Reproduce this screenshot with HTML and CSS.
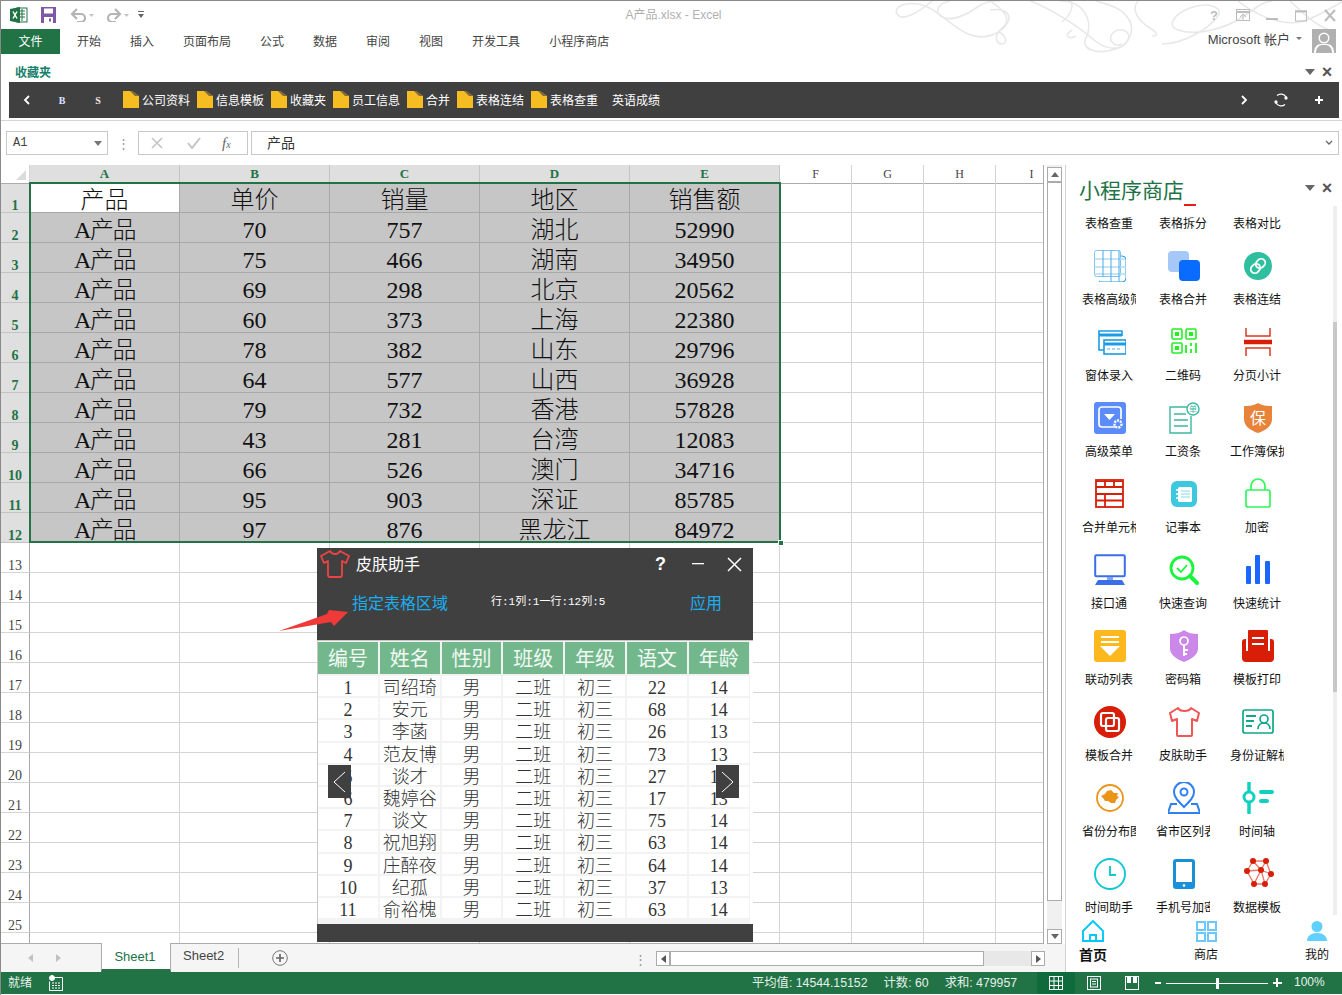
FILE: index.html
```html
<!DOCTYPE html>
<html lang="zh-CN">
<head>
<meta charset="utf-8">
<title>A产品.xlsx - Excel</title>
<link rel="stylesheet" href="styles.css">
</head>
<body>
<div class="win">
  <svg class="swirl" viewBox="890 0 452 60" width="452" height="60" fill="none" stroke="#e8e8e8" stroke-width="1.6">
    <path d="M932 1C918 13 902 22 897 14C893 6 906 2 918 4C936 7 950 26 968 34C984 41 1002 34 1008 22C1012 12 1002 8 990 10"/>
    <path d="M950 1C938 3 934 12 942 17C952 22 968 14 976 8C984 2 992 0 1000 1"/>
    <path d="M990 1C1004 10 1014 20 1000 30C994 36 996 44 1002 44C1008 44 1006 34 998 32"/>
    <path d="M1030 1C1050 8 1078 26 1094 40C1106 50 1122 52 1128 40C1132 30 1118 26 1112 34C1108 40 1114 48 1122 44"/>
    <path d="M1060 1C1084 0 1094 22 1086 38C1080 50 1098 54 1112 50C1130 46 1136 30 1128 18C1120 6 1104 4 1096 1"/>
    <path d="M1138 1C1130 10 1140 22 1150 28C1156 32 1160 36 1152 36"/>
    <path d="M1062 22C1072 14 1074 4 1070 1M1072 30C1062 36 1070 40 1076 36"/>
    <path d="M1162 44C1182 44 1208 30 1218 16C1224 6 1206 2 1190 8C1174 14 1166 26 1178 30C1194 36 1224 30 1244 16C1256 8 1262 2 1272 1"/>
    <path d="M1238 1C1254 14 1280 26 1300 22C1312 20 1330 8 1342 2"/>
    <path d="M1290 1C1300 10 1316 28 1336 32"/>
  </svg>

  <header class="titlebar">
    <div class="qat">
      <svg width="18" height="18" viewBox="0 0 18 18"><rect x="7" y="2" width="10" height="14" fill="#fff" stroke="#207245"/><path d="M9 5h6M9 8h6M9 11h6M12 3v12" stroke="#207245"/><path d="M0 3l10-2v16L0 15z" fill="#207245"/><path d="M3 5.500l4 7M7 5.500l-4 7" stroke="#fff" stroke-width="1.500"/></svg>
      <svg width="15" height="16" viewBox="0 0 15 16"><path d="M0 0h15v16H0z" fill="#7e57a5"/><rect x="3" y="1.500" width="9" height="5" fill="#fff"/><rect x="3" y="10" width="9" height="6" fill="#fff"/><rect x="8" y="11.500" width="2" height="3" fill="#7e57a5"/></svg>
      <svg class="qat-undo" width="24" height="14" viewBox="0 0 24 14" fill="none"><path d="M3 6h8a4 4 0 0 1 0 8H7" stroke="#b4b4b4" stroke-width="2.200"/><path d="M7 1L2 6l5 5" stroke="#b4b4b4" stroke-width="2.200"/><path d="M19 6h5l-2.500 3z" fill="#c4c4c4"/></svg>
      <svg class="qat-redo" width="24" height="14" viewBox="0 0 24 14" fill="none"><path d="M14 6H7a4 4 0 0 0 0 8h4" stroke="#b4b4b4" stroke-width="2.200"/><path d="M10 1l5 5-5 5" stroke="#b4b4b4" stroke-width="2.200"/><path d="M19 6h5l-2.500 3z" fill="#c4c4c4"/></svg>
      <svg class="qat-more" width="6" height="8" viewBox="0 0 6 8"><path d="M0 0h6v1H0zM0 3h6L3 7z" fill="#666"/></svg>
    </div>
    <div class="doc-title">A产品.xlsx - Excel</div>
    <div class="winctl">
      <span class="help">?</span>
      <svg width="14" height="13" viewBox="0 0 14 13" fill="none" stroke="#bdbdbd"><rect x=".5" y=".5" width="13" height="11"/><path d="M1 3h12" stroke-width="2"/><path d="M4 8l3-3 3 3M7 5v6"/></svg>
      <svg width="14" height="13" viewBox="0 0 14 13"><rect x="1" y="9" width="12" height="2" fill="#bdbdbd"/></svg>
      <svg width="14" height="13" viewBox="0 0 14 13" fill="none" stroke="#bdbdbd"><rect x="1.500" y="2" width="11" height="10"/><path d="M1 2.500h12" stroke-width="2"/></svg>
      <svg width="14" height="13" viewBox="0 0 14 13" stroke="#bdbdbd" stroke-width="2"><path d="M2 1l10 11M12 1L2 12"/></svg>
    </div>
  </header>

  <nav class="tabs">
    <span class="file-tab">文件</span>
    <ul class="tab-list">
      <li>开始</li><li>插入</li><li>页面布局</li><li>公式</li><li>数据</li><li>审阅</li><li>视图</li><li>开发工具</li><li>小程序商店</li>
    </ul>
    <div class="account">
      <span class="acct-name">Microsoft 帐户</span>
      <svg class="acct-caret" width="6" height="4" viewBox="0 0 6 4"><path d="M0 0h6L3 3z" fill="#777"/></svg>
      <svg class="avatar" width="24" height="24" viewBox="0 0 24 24"><rect width="24" height="24" fill="#b0b0b0"/><circle cx="12" cy="9" r="5.500" fill="#fff"/><path d="M2 24c0-7 4-9 7-9h6c3 0 7 2 7 9z" fill="#fff"/><circle cx="12" cy="9" r="4" fill="#b0b0b0"/><path d="M4 24c0-5 3-8 6-8h4c3 0 6 3 6 8z" fill="#b0b0b0"/></svg>
    </div>
  </nav>

  <section class="ribbon">
    <div class="ribbon-head">
      <span class="ribbon-label">收藏夹</span>
      <span class="pane-ctl"><i class="tri"></i><b class="cross">×</b></span>
    </div>
    <div class="favbar">
      <svg class="fav-back" width="8" height="10" viewBox="0 0 8 10" fill="none" stroke="#fff" stroke-width="1.800"><path d="M6 1L2 5l4 4"/></svg>
      <span class="fav-b">B</span>
      <span class="fav-s">S</span>
      <div class="fav-items">
        <span class="fav"><svg class="folder" width="16" height="17" viewBox="0 0 16 17"><path d="M0 0h9l7 5v12H0z" fill="#f6bd23"/><path d="M7 0h2l7 5H12z" fill="#7d6a3a"/></svg>公司资料</span>
        <span class="fav"><svg class="folder" width="16" height="17" viewBox="0 0 16 17"><path d="M0 0h9l7 5v12H0z" fill="#f6bd23"/><path d="M7 0h2l7 5H12z" fill="#7d6a3a"/></svg>信息模板</span>
        <span class="fav"><svg class="folder" width="16" height="17" viewBox="0 0 16 17"><path d="M0 0h9l7 5v12H0z" fill="#f6bd23"/><path d="M7 0h2l7 5H12z" fill="#7d6a3a"/></svg>收藏夹</span>
        <span class="fav"><svg class="folder" width="16" height="17" viewBox="0 0 16 17"><path d="M0 0h9l7 5v12H0z" fill="#f6bd23"/><path d="M7 0h2l7 5H12z" fill="#7d6a3a"/></svg>员工信息</span>
        <span class="fav"><svg class="folder" width="16" height="17" viewBox="0 0 16 17"><path d="M0 0h9l7 5v12H0z" fill="#f6bd23"/><path d="M7 0h2l7 5H12z" fill="#7d6a3a"/></svg>合并</span>
        <span class="fav"><svg class="folder" width="16" height="17" viewBox="0 0 16 17"><path d="M0 0h9l7 5v12H0z" fill="#f6bd23"/><path d="M7 0h2l7 5H12z" fill="#7d6a3a"/></svg>表格连结</span>
        <span class="fav"><svg class="folder" width="16" height="17" viewBox="0 0 16 17"><path d="M0 0h9l7 5v12H0z" fill="#f6bd23"/><path d="M7 0h2l7 5H12z" fill="#7d6a3a"/></svg>表格查重</span>
        <span class="fav fav-plain">英语成绩</span>
      </div>
      <div class="fav-tools">
        <svg width="8" height="10" viewBox="0 0 8 10" fill="none" stroke="#fff" stroke-width="1.800"><path d="M2 1l4 4-4 4"/></svg>
        <svg width="14" height="14" viewBox="0 0 14 14" fill="none" stroke="#fff" stroke-width="1.300"><path d="M3 2.500A6 6 0 0 1 12 4M11 11.500A6 6 0 0 1 2 10"/><circle cx="12" cy="5" r="1" fill="#fff"/><circle cx="2" cy="9" r="1" fill="#fff"/></svg>
        <svg width="10" height="10" viewBox="0 0 10 10" stroke="#fff" stroke-width="2"><path d="M5 1v8M1 5h8"/></svg>
      </div>
    </div>
  </section>

  <section class="formula">
    <div class="namebox"><span>A1</span><i class="tri tri-small"></i></div>
    <span class="fdots">⋮</span>
    <div class="fxbox">
      <svg width="12" height="12" viewBox="0 0 12 12" stroke="#c4c4c4" stroke-width="1.600"><path d="M1 1l10 10M11 1L1 11"/></svg>
      <svg width="14" height="12" viewBox="0 0 14 12" fill="none" stroke="#c4c4c4" stroke-width="2"><path d="M1 6l4 5 8-10"/></svg>
      <span class="fx">f<sub>x</sub></span>
    </div>
    <div class="finput"><span>产品</span><svg width="8" height="5" viewBox="0 0 8 5" fill="none" stroke="#666" stroke-width="1.300"><path d="M1 1l3 3 3-3"/></svg></div>
  </section>

  <main class="middle">
    <div class="workarea">
      <div class="sheetrow">
        <div class="sheet">
          <div class="row hdr">
            <div class="corner"></div>
            <div class="ch on">A</div><div class="ch on">B</div><div class="ch on">C</div><div class="ch on">D</div><div class="ch on">E</div>
            <div class="ch-rest"><span>F</span><span>G</span><span>H</span><span>I</span></div>
          </div>
          <div class="row first"><div class="rh on">1</div><div class="c a1">产品</div><div class="c">单价</div><div class="c">销量</div><div class="c">地区</div><div class="c">销售额</div><div class="rest"></div></div>
          <div class="row data"><div class="rh on">2</div><div class="c">A产品</div><div class="c">70</div><div class="c">757</div><div class="c">湖北</div><div class="c">52990</div><div class="rest"></div></div>
          <div class="row data"><div class="rh on">3</div><div class="c">A产品</div><div class="c">75</div><div class="c">466</div><div class="c">湖南</div><div class="c">34950</div><div class="rest"></div></div>
          <div class="row data"><div class="rh on">4</div><div class="c">A产品</div><div class="c">69</div><div class="c">298</div><div class="c">北京</div><div class="c">20562</div><div class="rest"></div></div>
          <div class="row data"><div class="rh on">5</div><div class="c">A产品</div><div class="c">60</div><div class="c">373</div><div class="c">上海</div><div class="c">22380</div><div class="rest"></div></div>
          <div class="row data"><div class="rh on">6</div><div class="c">A产品</div><div class="c">78</div><div class="c">382</div><div class="c">山东</div><div class="c">29796</div><div class="rest"></div></div>
          <div class="row data"><div class="rh on">7</div><div class="c">A产品</div><div class="c">64</div><div class="c">577</div><div class="c">山西</div><div class="c">36928</div><div class="rest"></div></div>
          <div class="row data"><div class="rh on">8</div><div class="c">A产品</div><div class="c">79</div><div class="c">732</div><div class="c">香港</div><div class="c">57828</div><div class="rest"></div></div>
          <div class="row data"><div class="rh on">9</div><div class="c">A产品</div><div class="c">43</div><div class="c">281</div><div class="c">台湾</div><div class="c">12083</div><div class="rest"></div></div>
          <div class="row data"><div class="rh on">10</div><div class="c">A产品</div><div class="c">66</div><div class="c">526</div><div class="c">澳门</div><div class="c">34716</div><div class="rest"></div></div>
          <div class="row data"><div class="rh on">11</div><div class="c">A产品</div><div class="c">95</div><div class="c">903</div><div class="c">深证</div><div class="c">85785</div><div class="rest"></div></div>
          <div class="row data"><div class="rh on">12</div><div class="c">A产品</div><div class="c">97</div><div class="c">876</div><div class="c">黑龙江</div><div class="c">84972</div><div class="rest"></div></div>
          <div class="row"><div class="rh">13</div><div class="wide"></div><div class="rest"></div></div>
          <div class="row"><div class="rh">14</div><div class="wide"></div><div class="rest"></div></div>
          <div class="row"><div class="rh">15</div><div class="wide"></div><div class="rest"></div></div>
          <div class="row"><div class="rh">16</div><div class="wide"></div><div class="rest"></div></div>
          <div class="row"><div class="rh">17</div><div class="wide"></div><div class="rest"></div></div>
          <div class="row"><div class="rh">18</div><div class="wide"></div><div class="rest"></div></div>
          <div class="row"><div class="rh">19</div><div class="wide"></div><div class="rest"></div></div>
          <div class="row"><div class="rh">20</div><div class="wide"></div><div class="rest"></div></div>
          <div class="row"><div class="rh">21</div><div class="wide"></div><div class="rest"></div></div>
          <div class="row"><div class="rh">22</div><div class="wide"></div><div class="rest"></div></div>
          <div class="row"><div class="rh">23</div><div class="wide"></div><div class="rest"></div></div>
          <div class="row"><div class="rh">24</div><div class="wide"></div><div class="rest"></div></div>
          <div class="row"><div class="rh">25</div><div class="wide"></div><div class="rest"></div></div>
          <div class="row"><div class="rh"></div><div class="wide"></div><div class="rest"></div></div>
          <div class="selection"><i class="handle"></i></div>
        </div>
        <div class="vscroll">
          <div class="sb-btn"><i class="up"></i></div>
          <div class="sb-thumb"></div>
          <div class="sb-track"></div>
          <div class="sb-btn"><i class="down"></i></div>
        </div>
      </div>
      <div class="tabbar">
        <div class="tab-nav"><i class="tl"></i><i class="tr"></i></div>
        <span class="sheet-tab active">Sheet1</span>
        <span class="sheet-tab">Sheet2</span>
        <span class="tab-sep"></span>
        <svg class="tab-add" width="16" height="16" viewBox="0 0 16 16" fill="none" stroke="#777"><circle cx="8" cy="8" r="7.300"/><path d="M8 4v8M4 8h8" stroke-width="1.700" stroke="#666"/></svg>
        <span class="tab-dots">⋮</span>
        <div class="hscroll">
          <div class="hs-btn"><i class="tl dark"></i></div>
          <div class="hs-thumb"></div>
          <div class="hs-track"></div>
          <div class="hs-btn"><i class="tr dark"></i></div>
        </div>
      </div>
    </div>

    <aside class="panel">
      <div class="panel-head">
        <h2>小程序商店</h2>
        <span class="pane-ctl"><i class="tri"></i><b class="cross">×</b></span>
        <i class="red-dash"></i>
      </div>
      <div class="tools">
        <div class="tool-grid">
          <div class="tool noicon"><span>表格查重</span></div>
          <div class="tool noicon"><span>表格拆分</span></div>
          <div class="tool noicon"><span>表格对比</span></div>

          <div class="tool"><svg viewBox="0 0 32 32" fill="none" stroke="#1c9ce4"><path d="M26 6h2a4 4 0 0 1 4 4v18a4 4 0 0 1-4 4H8a4 4 0 0 1-3-1"/><rect x=".5" y=".5" width="26" height="26" rx="2" stroke="#7cc6ee"/><path d="M.5 9h31M.5 17h31M.5 24h31" stroke="#b4dcf2" stroke-width="1.600"/><path d="M9 .5v26M17 .5V32M25 .5V32" stroke="#46ace8"/></svg><span>表格高级筛选</span></div>
          <div class="tool"><svg viewBox="0 0 32 32"><rect x="0" y="1" width="21" height="21" rx="4" fill="#a6c8f8"/><rect x="11" y="10" width="21" height="21" rx="4" fill="#0a6cff"/></svg><span>表格合并</span></div>
          <div class="tool"><svg viewBox="0 0 32 32"><circle cx="16" cy="16" r="14" fill="#2fbf9f"/><g fill="none" stroke="#fff" stroke-width="1.800"><rect x="14.500" y="8.500" width="8" height="10" rx="4" transform="rotate(45 18.500 13.500)"/><rect x="9.500" y="13.500" width="8" height="10" rx="4" transform="rotate(45 13.500 18.500)"/></g></svg><span>表格连结</span></div>

          <div class="tool"><svg viewBox="0 0 32 32" fill="none" stroke="#1c9ce4" stroke-width="1.600"><path d="M28 10V5H5v19h5"/><path d="M5 9h23" stroke-width="3"/><rect x="10" y="14" width="22" height="14" fill="#fff"/><path d="M10 18h22" stroke-width="3"/><path d="M13 23h3M18 23h3M23 23h3" stroke="#8cc8ec"/></svg><span>窗体录入</span></div>
          <div class="tool"><svg viewBox="0 0 32 32" fill="none" stroke="#22f022" stroke-width="1.600"><rect x="4" y="3" width="10" height="10" rx="1"/><rect x="18" y="3" width="10" height="10" rx="1"/><rect x="4" y="17" width="10" height="10" rx="1"/><g fill="#22f022" stroke="none"><rect x="7" y="6" width="4" height="4"/><rect x="21" y="6" width="4" height="4"/><rect x="7" y="20" width="4" height="4"/></g><path d="M18 19v8M23 17v3M23 23v4M28 17v10" stroke-width="1.800"/></svg><span>二维码</span></div>
          <div class="tool"><svg viewBox="0 0 32 32" fill="none" stroke="#d83a22" stroke-width="1.500"><path d="M4 2v8h24V2M4 30v-8h24v8"/><path d="M2 16h28" stroke-width="4.500" stroke="#d81e06"/></svg><span>分页小计</span></div>

          <div class="tool"><svg viewBox="0 0 32 32"><rect width="32" height="32" rx="3" fill="#5b8cfa"/><path d="M22 25H8a3 3 0 0 1-3-3V8a3 3 0 0 1 3-3h16a3 3 0 0 1 3 3v9" fill="none" stroke="#fff" stroke-width="1.700"/><path d="M10 12h11l-5.500 6z" fill="#fff"/><circle cx="24" cy="22" r="3.500" fill="none" stroke="#fff" stroke-width="2.400" stroke-dasharray="2 1"/></svg><span>高级菜单</span></div>
          <div class="tool"><svg viewBox="0 0 32 32" fill="none" stroke="#3cb8a0" stroke-width="1.400"><path d="M21 5H2v26h21V14"/><path d="M6 12h12M6 18h14M6 24h14" stroke-width="1.600"/><circle cx="25" cy="7" r="6" fill="#fff"/><text x="25" y="10" font-size="8" text-anchor="middle" fill="#3cb8a0" stroke="none">单</text></svg><span>工资条</span></div>
          <div class="tool"><svg viewBox="0 0 32 32"><path d="M16 1c5 3 10 3 14 3v13c0 8-8 12-14 14C10 29 2 25 2 17V4c4 0 9 0 14-3z" fill="#e8833a"/><text x="16" y="22" font-size="16" text-anchor="middle" fill="#fff">保</text></svg><span>工作簿保护</span></div>

          <div class="tool"><svg viewBox="0 0 32 32" fill="none" stroke="#d81e06" stroke-width="1.800"><rect x="2" y="2" width="27" height="27"/><path d="M2 9h27M2 16h27M2 22.500h27M11 2v7M20 2v7M11 16v6.500M11 22.500V29" /><path d="M2 3.500h27M2 16.500h27" stroke-width="1"/></svg><span>合并单元格</span></div>
          <div class="tool"><svg viewBox="0 0 32 32"><rect x="3" y="3" width="26" height="26" rx="6" fill="#3ec8e0"/><rect x="10" y="9" width="14" height="15" rx="1.500" fill="#fff"/><path d="M13 13h9M13 16h9M13 19h9" stroke="#7fdcec"/><path d="M8 12h3M8 16h3M8 20h3" stroke="#fff" stroke-width="1.500"/></svg><span>记事本</span></div>
          <div class="tool"><svg viewBox="0 0 32 32" fill="none" stroke="#2ff85a" stroke-width="1.700"><rect x="4" y="12" width="24" height="17" rx="2"/><path d="M9 12V8a7 7 0 0 1 14 0v4"/></svg><span>加密</span></div>

          <div class="tool"><svg viewBox="0 0 32 32"><rect x="1.200" y="1.200" width="29.600" height="21" rx="1" fill="#fff" stroke="#3a6fe8" stroke-width="2"/><rect x="13" y="23" width="6" height="4" fill="#7ea4ee"/><path d="M4 26h24l3 5H1z" fill="#3a6fe8"/></svg><span>接口通</span></div>
          <div class="tool"><svg viewBox="0 0 32 32" fill="none" stroke="#18f53a" stroke-width="2.800"><circle cx="14" cy="14" r="11"/><path d="M22 22l7 7" stroke-width="4" stroke-linecap="round"/><path d="M9 14l4 4 6-7" stroke-width="1.800"/></svg><span>快速查询</span></div>
          <div class="tool"><svg viewBox="0 0 32 32" fill="#1a66ff"><rect x="4" y="12" width="5" height="18" rx="1"/><rect x="13" y="1" width="5" height="29" rx="1"/><rect x="23" y="7" width="5" height="23" rx="1"/></svg><span>快速统计</span></div>

          <div class="tool"><svg viewBox="0 0 32 32"><rect width="32" height="32" rx="3" fill="#fdb81e"/><path d="M7 6h18v2H7zM7 11h18v2H7z" fill="#fff"/><path d="M6 16h20L16 26z" fill="#fff"/></svg><span>联动列表</span></div>
          <div class="tool"><svg viewBox="0 0 32 32"><path d="M16 0c4 3 9 4 14 4v15c0 6-8 11-14 13C10 30 2 25 2 19V4c5 0 10-1 14-4z" fill="#cc88e8"/><circle cx="16" cy="11" r="4" fill="none" stroke="#fff" stroke-width="1.700"/><path d="M16 15v11M16 20h4M16 24h3" stroke="#fff" stroke-width="1.800"/></svg><span>密码箱</span></div>
          <div class="tool"><svg viewBox="0 0 32 32" fill="#d81e06"><rect x="6" y="0" width="20" height="22" rx="1"/><path d="M4 9v12h24V9h1a3 3 0 0 1 3 3v16a4 4 0 0 1-4 4H4a4 4 0 0 1-4-4V12a3 3 0 0 1 3-3z"/><path d="M10 7h12v2H10zM10 13h12v2H10z" fill="#fff"/><path d="M4 22h24v3H4z"/></svg><span>模板打印</span></div>

          <div class="tool"><svg viewBox="0 0 32 32"><circle cx="16" cy="16" r="16" fill="#d81e06"/><g fill="none" stroke="#fff" stroke-width="2.200"><rect x="7" y="7" width="13" height="13" rx="2"/><rect x="12" y="12" width="13" height="13" rx="2"/></g></svg><span>模板合并</span></div>
          <div class="tool"><svg viewBox="0 0 32 32" fill="none" stroke="#f25555" stroke-width="2"><path d="M10 2l-8 5 2 8 5-2v16a1 1 0 0 0 1 1h13a1 1 0 0 0 1-1V13l5 2 2-8-8-5c-2 4-11 4-13 0z" stroke-linejoin="round"/></svg><span>皮肤助手</span></div>
          <div class="tool"><svg viewBox="0 0 32 32" fill="none" stroke="#10a88a" stroke-width="1.700"><rect x="1" y="4" width="30" height="23" rx="2"/><path d="M4 10h10M4 15h8M4 20h6" stroke-width="2"/><circle cx="22" cy="13" r="4"/><path d="M16 23c0-4 3-6 6-6s6 2 6 6"/></svg><span>身份证解析</span></div>

          <div class="tool"><svg viewBox="0 0 32 32"><circle cx="16" cy="16" r="13" fill="none" stroke="#ea9518" stroke-width="1.800"/><path d="M7 14l4-2 2-3 4-1 3 3 4 0-1 3 2 1-3 3-1 3-4 0-3-2-3 0-2-3z" fill="#ea9518"/></svg><span>省份分布图</span></div>
          <div class="tool"><svg viewBox="0 0 32 32" fill="none" stroke="#2f80f0" stroke-width="2"><path d="M16 25C10 19 6 15 6 10a10 10 0 0 1 20 0c0 5-4 9-10 15z"/><circle cx="16" cy="10" r="3.500"/><path d="M9 22H3l-3 9h32l-3-9h-6"/></svg><span>省市区列表</span></div>
          <div class="tool"><svg viewBox="0 0 32 32"><path d="M7 0v32" stroke="#10d0c0" stroke-width="3.500" stroke-linecap="round"/><circle cx="7" cy="15" r="5" fill="#fff" stroke="#10d0c0" stroke-width="3"/><rect x="17" y="8" width="15" height="4" rx="2" fill="#10d0c0"/><rect x="17" y="17" width="10" height="4" rx="2" fill="#10d0c0"/></svg><span>时间轴</span></div>

          <div class="tool"><svg viewBox="0 0 32 32" fill="none" stroke="#10c8d0" stroke-width="1.900"><circle cx="16" cy="16" r="15"/><path d="M16 8v9h6"/></svg><span>时间助手</span></div>
          <div class="tool"><svg viewBox="0 0 32 32"><path d="M8 1h16a3 3 0 0 1 3 3v24a3 3 0 0 1-3 3H8a3 3 0 0 1-3-3V4a3 3 0 0 1 3-3z" fill="#1a90d8"/><rect x="8" y="4" width="16" height="20" fill="#fff"/><circle cx="16" cy="27.500" r="1.300" fill="#fff"/></svg><span>手机号加密</span></div>
          <div class="tool"><svg viewBox="0 0 32 32" fill="#d81e06"><path d="M11 3l13 0M5 13l6-10M5 13l7 13M5 13l14-1M11 3l8 9M24 3l5 13M24 3l-5 9M19 12l10 4M19 12l4 14M29 16l-6 10M12 26h11M12 26l7-14" stroke="#e67868" stroke-width="1.300" fill="none"/><circle cx="11" cy="3" r="3"/><circle cx="24" cy="3" r="3"/><circle cx="5" cy="13" r="3"/><circle cx="19" cy="12" r="3"/><circle cx="29" cy="16" r="3"/><circle cx="12" cy="26" r="3"/><circle cx="23" cy="26" r="3"/></svg><span>数据模板</span></div>
        </div>
        <div class="tools-sb"><i></i></div>
      </div>
      <nav class="bottomnav">
        <div class="bn bn-active"><svg width="22" height="22" viewBox="0 0 22 22" fill="none" stroke="#00c8f8" stroke-width="1.900"><path d="M1 11L11 1l10 10v10H1zM8 21v-6h6v6"/></svg><span>首页</span></div>
        <div class="bn"><svg width="22" height="22" viewBox="0 0 22 22" fill="none" stroke="#6cc8f8" stroke-width="2"><rect x="2" y="2" width="8" height="8"/><rect x="13" y="2" width="8" height="8"/><rect x="2" y="13" width="8" height="8"/><rect x="13" y="13" width="8" height="8"/></svg><span>商店</span></div>
        <div class="bn"><svg width="22" height="22" viewBox="0 0 22 22" fill="#60d0ff"><circle cx="11" cy="6.500" r="5.500"/><path d="M1 21c0-5 4-8 10-8s10 3 10 8z"/></svg><span>我的</span></div>
      </nav>
    </aside>
  </main>

  <footer class="status">
    <span class="st-ready">就绪</span>
    <svg class="st-macro" width="14" height="16" viewBox="0 0 14 16" fill="none" stroke="#fff"><circle cx="3" cy="3" r="2.500" fill="#fff"/><path d="M5.500 2.500h8v13H.500v-9"/><path d="M3 8h8M3 10.500h8M3 13h8" stroke-dasharray="2 1"/></svg>
    <div class="st-stats"><span>平均值: 14544.15152</span><span>计数: 60</span><span>求和: 479957</span></div>
    <div class="st-view">
      <span class="v-on"><svg width="14" height="14" viewBox="0 0 14 14" fill="none" stroke="#fff"><rect x=".5" y=".5" width="13" height="13"/><path d="M.5 5h13M.5 9.500h13M5 .5v13M9.500 .5v13"/></svg></span>
      <svg class="v-layout" width="14" height="14" viewBox="0 0 14 14" fill="none" stroke="#fff"><rect x=".5" y=".5" width="13" height="13"/><rect x="3.500" y="3" width="7" height="8"/><path d="M5 5.500h4M5 8h4"/></svg>
      <svg class="v-page" width="14" height="14" viewBox="0 0 14 14" fill="none" stroke="#fff"><rect x=".5" y=".5" width="13" height="13"/><path d="M2 0h4v7H2zM8 0h4v7H8z" fill="#fff" stroke="none"/></svg>
    </div>
    <div class="zoom">
      <i class="z-minus"></i>
      <div class="z-track"><i class="z-knob"></i></div>
      <i class="z-plus"></i>
      <span class="z-pct">100%</span>
    </div>
  </footer>

  <div class="dialog">
    <div class="d-title">
      <svg width="30" height="28" viewBox="0 0 30 28" fill="none" stroke="#ee4444" stroke-width="1.800"><path d="M10 1L1 6l3 7 4-2v14a2 2 0 0 0 2 2h10a2 2 0 0 0 2-2V11l4 2 3-7-9-5c-2 4-8 4-10 0z" stroke-linejoin="round"/></svg>
      <span class="d-name">皮肤助手</span>
      <span class="d-ctl">
        <b class="d-help">?</b>
        <svg width="12" height="12" viewBox="0 0 12 12"><rect y="5" width="12" height="1.300" fill="#fff"/></svg>
        <svg width="15" height="15" viewBox="0 0 15 15" stroke="#fff" stroke-width="1.500"><path d="M1 1l13 13M14 1L1 14"/></svg>
      </span>
    </div>
    <div class="d-tools">
      <a class="d-link">指定表格区域</a>
      <span class="d-range">行:1列:1一行:12列:5</span>
      <a class="d-link d-apply">应用</a>
    </div>
    <div class="d-table">
      <div class="th">编号</div><div class="th">姓名</div><div class="th">性别</div><div class="th">班级</div><div class="th">年级</div><div class="th">语文</div><div class="th">年龄</div>
      <div class="td">1</div><div class="td">司绍琦</div><div class="td">男</div><div class="td">二班</div><div class="td">初三</div><div class="td">22</div><div class="td">14</div>
      <div class="td">2</div><div class="td">安元</div><div class="td">男</div><div class="td">二班</div><div class="td">初三</div><div class="td">68</div><div class="td">14</div>
      <div class="td">3</div><div class="td">李菡</div><div class="td">男</div><div class="td">二班</div><div class="td">初三</div><div class="td">26</div><div class="td">13</div>
      <div class="td">4</div><div class="td">范友博</div><div class="td">男</div><div class="td">二班</div><div class="td">初三</div><div class="td">73</div><div class="td">13</div>
      <div class="td">5</div><div class="td">谈才</div><div class="td">男</div><div class="td">二班</div><div class="td">初三</div><div class="td">27</div><div class="td">14</div>
      <div class="td">6</div><div class="td">魏婷谷</div><div class="td">男</div><div class="td">二班</div><div class="td">初三</div><div class="td">17</div><div class="td">13</div>
      <div class="td">7</div><div class="td">谈文</div><div class="td">男</div><div class="td">二班</div><div class="td">初三</div><div class="td">75</div><div class="td">14</div>
      <div class="td">8</div><div class="td">祝旭翔</div><div class="td">男</div><div class="td">二班</div><div class="td">初三</div><div class="td">63</div><div class="td">14</div>
      <div class="td">9</div><div class="td">庄醉夜</div><div class="td">男</div><div class="td">二班</div><div class="td">初三</div><div class="td">64</div><div class="td">14</div>
      <div class="td">10</div><div class="td">纪孤</div><div class="td">男</div><div class="td">二班</div><div class="td">初三</div><div class="td">37</div><div class="td">13</div>
      <div class="td">11</div><div class="td">俞裕槐</div><div class="td">男</div><div class="td">二班</div><div class="td">初三</div><div class="td">63</div><div class="td">14</div>
    </div>
    <div class="d-foot"></div>
    <div class="d-nav d-prev"><svg width="13" height="22" viewBox="0 0 13 22" fill="none" stroke="#fff"><path d="M12 1L1 11l11 10"/></svg></div>
    <div class="d-nav d-next"><svg width="13" height="22" viewBox="0 0 13 22" fill="none" stroke="#fff"><path d="M1 1l11 10L1 21"/></svg></div>
  </div>
  <svg class="arrow" width="70" height="24" viewBox="0 0 70 24"><path d="M1 22L49 5 51 1l19 2-14 14-3-4z" fill="#f03a3a"/></svg>
</div>
</body>
</html>
```
FILE: styles.css
```css
* { box-sizing: border-box; }
html, body { margin: 0; padding: 0; background: #fff; }
body { font-family: "Noto Sans CJK SC", "Liberation Sans", sans-serif; font-size: 12px; color: #333; overflow: hidden; }
ul { list-style: none; margin: 0; padding: 0; }
i { display: block; font-style: normal; }
svg { display: block; flex: none; }

.win { position: relative; width: 1342px; height: 995px; display: flex; flex-direction: column; border-top: 1px solid #8a8a8a; border-left: 1px solid #8a8a8a; overflow: hidden; background: #fff; }
.swirl { position: absolute; left: 889px; top: -1px; }

/* title bar */
.titlebar { position: relative; height: 28px; flex: none; display: flex; align-items: center; }
.qat { flex: 1 1 0; display: flex; align-items: center; padding-left: 9px; gap: 13px; }
.qat-undo { margin-left: 1px; }
.qat-redo { margin-left: -2px; }
.qat-more { margin-left: -4px; }
.doc-title { font-family: "Liberation Sans", "Noto Sans CJK SC", sans-serif; color: #b0b0b0; font-size: 12px; margin-bottom: 3px; }
.winctl { flex: 1 1 0; display: flex; justify-content: flex-end; align-items: center; gap: 15px; padding-right: 5px; }
.help { font: bold 13px "Liberation Sans", sans-serif; color: #bdbdbd; width: 14px; text-align: center; }

/* tabs */
.tabs { position: relative; height: 25px; flex: none; display: flex; align-items: center; }
.file-tab { width: 59px; height: 25px; background: #217346; color: #fff; font-size: 12px; line-height: 24px; text-align: center; }
.tab-list { display: flex; gap: 29px; margin-left: 17px; color: #444; line-height: 22px; margin-bottom: 2px; }
.account { margin-left: auto; display: flex; align-items: center; gap: 6px; padding-right: 6px; font-family: "Liberation Sans", "Noto Sans CJK SC", sans-serif; font-size: 13px; color: #444; }
.acct-name { margin-bottom: 6px; }
.acct-caret { margin-bottom: 6px; }
.avatar { margin-left: 4px; margin-top: -1px; }

/* ribbon */
.ribbon { position: relative; height: 66px; flex: none; }
.ribbon-head { height: 28px; display: flex; align-items: center; justify-content: space-between; padding: 7px 9px 0 14px; }
.ribbon-label { color: #16806a; font-weight: 700; }
.pane-ctl { display: flex; align-items: center; gap: 6px; }
.tri { width: 0; height: 0; border-left: 5px solid transparent; border-right: 5px solid transparent; border-top: 6px solid #666; }
.tri-small { border-left-width: 4px; border-right-width: 4px; border-top-width: 5px; border-top-color: #777; }
.cross { font: bold 18px/16px "Liberation Sans", sans-serif; color: #555; width: 12px; text-align: center; }
.favbar { height: 36px; margin: 0 3px 0 8px; background: #404040; color: #fff; display: flex; align-items: center; padding-left: 14px; line-height: 16px; }
.fav-b, .fav-s { font: bold 10px "Liberation Serif", serif; width: 8px; text-align: center; }
.fav-b { margin-left: 27px; color: #dfe4ff; }
.fav-s { margin-left: 28px; color: #ffe6ea; }
.fav-items { display: flex; align-items: center; gap: 7px; margin-left: 21px; margin-bottom: 1px; }
.fav { display: flex; align-items: center; gap: 3px; }
.fav-plain { margin-left: 7px; }
.fav-tools { margin-left: auto; display: flex; align-items: center; gap: 26px; padding-right: 15px; }

/* formula */
.formula { height: 45px; flex: none; border-top: 1px solid #d4d4d4; padding: 10px 3px 0 5px; display: flex; align-items: flex-start; }
.namebox, .fxbox, .finput { height: 24px; border: 1px solid #c8c8c8; display: flex; align-items: center; background: #fff; }
.namebox { width: 102px; justify-content: space-between; padding: 0 5px 0 6px; font: 12px "Liberation Mono", monospace; color: #444; }
.fdots { width: 30px; text-align: center; color: #999; line-height: 24px; font-size: 13px; }
.fxbox { width: 110px; gap: 24px; padding-left: 12px; }
.fx { font: italic 15px "Liberation Serif", serif; color: #666; margin-left: -3px; }
.fx sub { font-size: 10px; vertical-align: baseline; }
.finput { flex: 1; margin-left: 3px; justify-content: space-between; padding: 0 5px 2px 15px; font-size: 14px; color: #333; }

/* sheet */
.middle { flex: none; height: 807px; display: flex; }
.workarea { width: 1064px; flex: none; display: flex; flex-direction: column; }
.sheetrow { height: 779px; flex: none; display: flex; }
.sheet { position: relative; width: 1043px; flex: none; overflow: hidden; border-right: 1px solid #ababab; border-bottom: 1px solid #ababab; font-family: "Liberation Serif", "Noto Sans CJK SC", serif; }
.row { display: grid; grid-template-columns: 29px repeat(5, 150px) 1fr; height: 30px; }
.row.first { height: 31px; }
.row.hdr { height: 17px; }
.corner { background: #fff; position: relative; border-right: 1px solid #d4d4d4; border-bottom: 1px solid #ababab; }
.corner::after { content: ""; position: absolute; right: 3px; bottom: 3px; border-left: 10px solid transparent; border-bottom: 10px solid #dcdcdc; }
.ch { background: #dfdfdf; color: #217346; font: bold 13px/18px "Liberation Serif", serif; text-align: center; border-right: 1px solid #c4c4c4; }
.ch-rest { display: flex; border-bottom: 1px solid #ababab; font: 12px/18px "Liberation Serif", serif; color: #444; }
.ch-rest span { width: 72px; flex: none; text-align: center; border-right: 1px solid #d4d4d4; }
.rh { display: flex; align-items: flex-end; justify-content: center; font: 14px/12px "Liberation Serif", serif; color: #444; background: #fff; border-right: 1px solid #aaa; border-bottom: 1px solid #d4d4d4; }
.rh.on { background: #dfdfdf; color: #217346; font-weight: 700; border-bottom-color: #c4c4c4; }
.c { background: #c6c6c6; border-right: 1px solid #a8a8a8; border-bottom: 1px solid #a8a8a8; font-size: 24px; line-height: 34px; height: 100%; text-align: center; color: #111; overflow: hidden; font-weight: 300; white-space: nowrap; }
.first .c { line-height: 36px; }
.data .c:nth-child(2) { letter-spacing: -1.500px; }
.c.a1 { background: #fff; }
.wide { grid-column: span 5; border-bottom: 1px solid #d4d4d4; background: repeating-linear-gradient(90deg, transparent 0 149px, #d4d4d4 149px 150px); }
.rest { border-bottom: 1px solid #d4d4d4; background: repeating-linear-gradient(90deg, transparent 0 71px, #d4d4d4 71px 72px); }
.selection { position: absolute; left: 28px; top: 17px; width: 752px; height: 361px; border: 2px solid #217346; }
.handle { position: absolute; right: -5px; bottom: -5px; width: 6px; height: 6px; background: #217346; border: 1px solid #fff; }

.vscroll { width: 15px; margin-left: 3px; height: 779px; display: flex; flex-direction: column; flex: none; background: #f0f0f0; }
.sb-btn { height: 15px; flex: none; background: #fff; border: 1px solid #ababab; display: flex; align-items: center; justify-content: center; margin-top: 2px; }
.sb-btn:last-child { margin-top: 0; margin-bottom: 0; }
.up { border-left: 4px solid transparent; border-right: 4px solid transparent; border-bottom: 5px solid #666; }
.down { border-left: 4px solid transparent; border-right: 4px solid transparent; border-top: 5px solid #666; }
.sb-thumb { height: 719px; flex: none; background: #fff; border: 1px solid #ababab; }
.sb-track { flex: 1; }

.tabbar { height: 28px; flex: none; background: #f5f5f5; display: flex; align-items: center; position: relative; }
.tab-nav { width: 100px; display: flex; justify-content: flex-start; gap: 23px; padding-left: 27px; }
.tl { border-top: 4px solid transparent; border-bottom: 4px solid transparent; border-right: 5px solid #c0c0c0; }
.tr { border-top: 4px solid transparent; border-bottom: 4px solid transparent; border-left: 5px solid #c0c0c0; }
.tl.dark { border-right-color: #555; }
.tr.dark { border-left-color: #555; }
.sheet-tab { font-family: "Liberation Sans", sans-serif; font-size: 13px; color: #444; line-height: 24px; padding: 0 12px; height: 28px; }
.sheet-tab + .sheet-tab { padding-right: 14px; }
.sheet-tab.active { width: 70px; background: #fff; color: #217346; border-bottom: 3px solid #217346; border-left: 1px solid #ababab; border-right: 1px solid #ababab; margin-top: -1px; height: 29px; text-align: center; padding: 2px 2px 0 0; }
.tab-sep { width: 1px; height: 20px; background: #b4b4b4; }
.tab-add { margin-left: 33px; }
.tab-dots { margin-left: 346px; color: #999; font-size: 13px; width: 10px; text-align: center; }
.hscroll { position: absolute; left: 655px; top: 7px; width: 389px; height: 15px; display: flex; background: #e8e8e8; }
.hs-btn { width: 14px; flex: none; background: #fff; border: 1px solid #ababab; display: flex; align-items: center; justify-content: center; }
.hs-thumb { width: 314px; flex: none; background: #fff; border: 1px solid #ababab; }
.hs-track { flex: 1; }

/* panel */
.panel { width: 277px; flex: none; border-left: 1px solid #d0d0d0; display: flex; flex-direction: column; background: #fff; }
.panel-head { position: relative; height: 41px; flex: none; display: flex; justify-content: space-between; align-items: flex-start; padding: 10px 9px 0 13px; }
.panel-head h2 { margin: 0; font-weight: 400; font-size: 21px; line-height: 28px; color: #217346; }
.panel-head .pane-ctl { margin-top: 5px; }
.red-dash { position: absolute; left: 118px; top: 39px; width: 12px; height: 2px; background: #e02010; }
.tools { height: 709px; flex: none; display: flex; overflow: hidden; }
.tool-grid { width: 267px; padding-left: 7px; display: grid; grid-template-columns: repeat(3, 74px); grid-template-rows: 25px; grid-auto-rows: 57px; row-gap: 19px; align-content: start; }
.tool { display: flex; flex-direction: column; align-items: center; }
.tool svg { width: 32px; height: 32px; }
.tool span { display: block; width: 54px; margin: 9px 2px 0 0; line-height: 16px; height: 16px; overflow: hidden; white-space: nowrap; color: #111; text-align: center; }
.tools-sb { width: 4px; background: #eee; height: 709px; padding-top: 116px; }
.tools-sb i { height: 370px; background: #c8c8c8; }
.bottomnav { flex: 1; display: flex; justify-content: space-between; padding: 5px 13px 0 13px; }
.bn { display: flex; flex-direction: column; align-items: center; gap: 4px; color: #111; line-height: 16px; }
.bn-active { font-size: 14px; font-weight: 700; }

/* status */
.status { height: 22px; flex: none; background: #217346; color: #e6f0ea; display: flex; align-items: center; padding: 0 0 3px 7px; position: relative; }
.st-macro { margin-left: 17px; margin-top: 3px; }
.st-stats { display: flex; gap: 16px; margin-left: 689px; font-family: "Liberation Sans", "Noto Sans CJK SC", sans-serif; font-size: 12.300px; }
.st-view { position: absolute; left: 1036px; top: 0; height: 22px; display: flex; align-items: center; }
.v-on { width: 38px; height: 22px; background: #0f6b3c; display: flex; align-items: center; justify-content: center; }
.v-layout { margin-left: 12px; }
.v-page { margin-left: 24px; }
.zoom { position: absolute; left: 1154px; top: 0; height: 22px; display: flex; align-items: center; }
.z-minus { width: 6px; height: 2px; background: #fff; }
.z-track { position: relative; width: 102px; height: 1px; background: #fff; margin: 0 5px; }
.z-knob { position: absolute; left: 50px; top: -5px; width: 3px; height: 11px; background: #fff; }
.z-plus { position: relative; width: 9px; height: 2px; background: #fff; }
.z-plus::after { content: ""; position: absolute; left: 3px; top: -4px; width: 2px; height: 9px; background: #fff; }
.z-pct { margin: 0 0 2px 12px; font-family: "Liberation Sans", sans-serif; }

/* dialog */
.dialog { position: absolute; left: 316px; top: 547px; width: 436px; height: 394px; background: #404040; display: flex; flex-direction: column; }
.d-title { height: 32px; flex: none; display: flex; align-items: center; padding: 0 11px 0 3px; color: #fff; }
.d-name { font-size: 16px; margin: 0 0 3px 6px; }
.d-ctl { margin-left: auto; display: flex; align-items: center; gap: 23px; }
.d-help { font: bold 18px "Liberation Sans", sans-serif; color: #fff; margin-right: 3px; }
.d-tools { height: 60px; flex: none; display: flex; align-items: flex-start; padding: 10px 0 0 35px; }
.d-link { font-size: 16px; color: #19aef0; line-height: 24px; }
.d-range { margin-left: 43px; font-family: "Liberation Mono", "Noto Sans CJK SC", monospace; font-size: 11px; color: #fff; line-height: 24px; width: 199px; }
.d-table { flex: none; height: 284px; overflow: hidden; background: linear-gradient(90deg, #f3f3f3 0 432px, #fff 432px); border-left: 1px solid #c8c8c8; border-top: 1px solid #c8c8c8; padding: 1px 0 0; display: grid; grid-template-columns: repeat(7, 59.800px); grid-template-rows: 32px; grid-auto-rows: 20.200px; column-gap: 2px; row-gap: 2px; align-content: start; font-family: "Liberation Serif", "Noto Sans CJK SC", serif; font-weight: 300; }
.th { background: #73b88c; color: #f4f9f5; font-size: 20px; line-height: 34px; text-align: center; white-space: nowrap; font-weight: 400; }
.td { background: #fff; color: #333; font-size: 18px; line-height: 24px; text-align: center; white-space: nowrap; }
.d-foot { flex: 1; }
.d-nav { position: absolute; top: 217px; width: 23px; height: 33px; background: #404040; display: flex; align-items: center; justify-content: center; }
.d-prev { left: 11px; }
.d-next { left: 399px; }
.arrow { position: absolute; left: 277px; top: 608px; }
```
